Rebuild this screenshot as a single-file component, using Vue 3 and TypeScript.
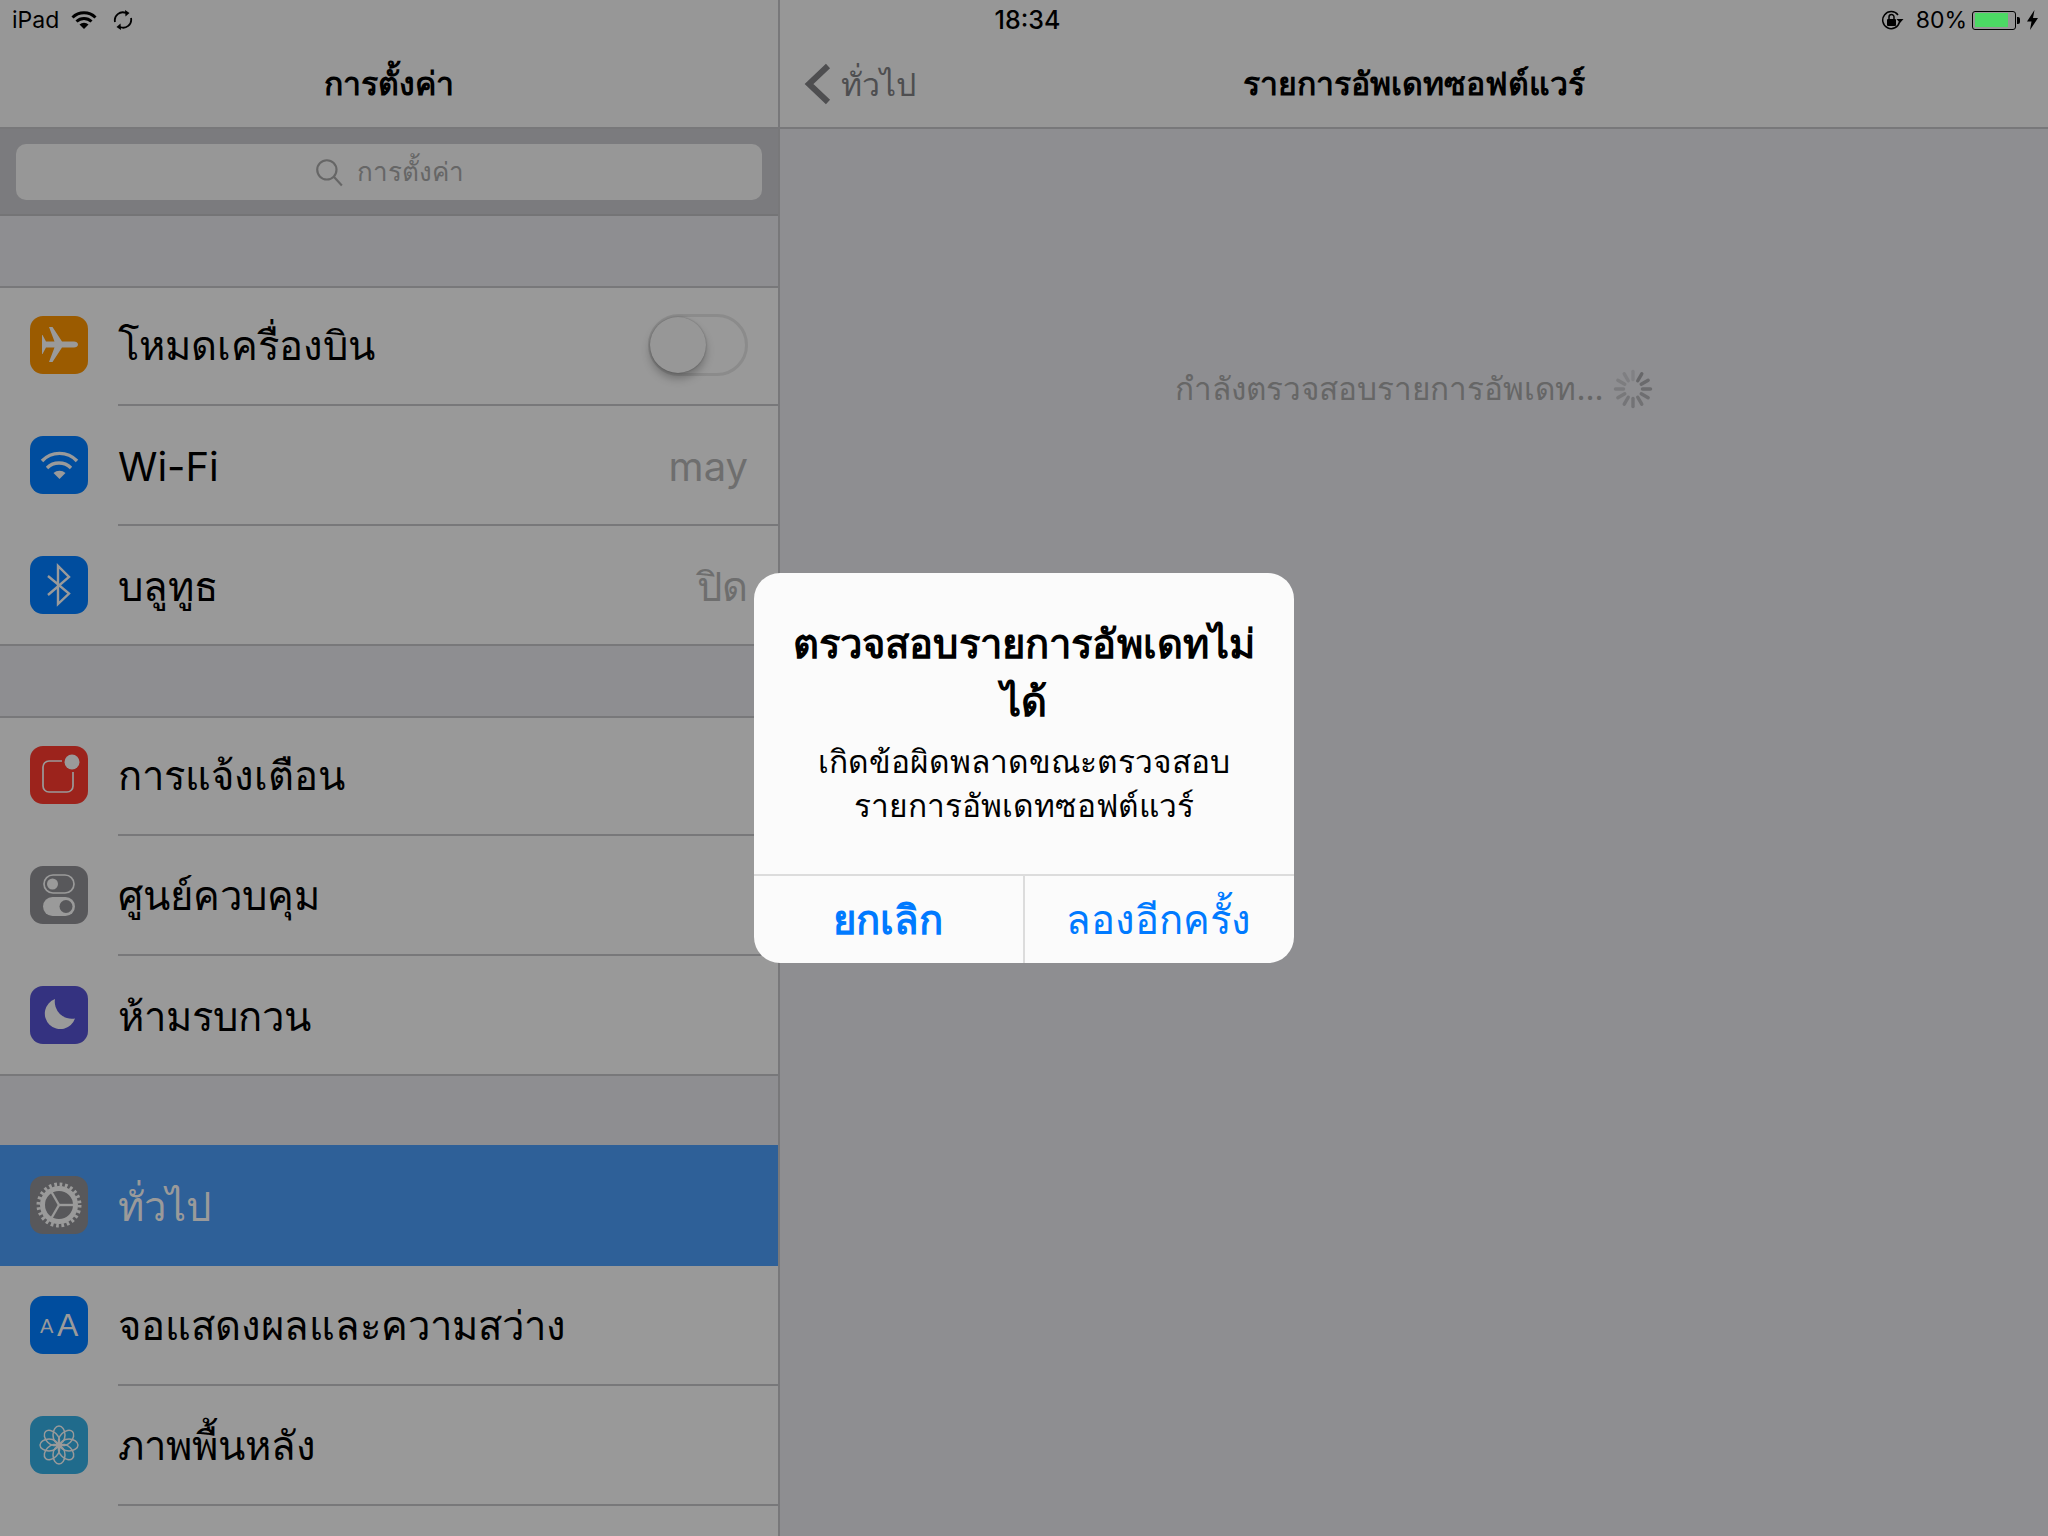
<script setup lang="ts">
interface Row {
  label: string
  icon: string
  tint: string
  value?: string
  toggle?: boolean
  selected?: boolean
}

const groups: Row[][] = [
  [
    { label: 'โหมดเครื่องบิน', icon: 'plane', tint: '#9b5b00', toggle: true },
    { label: 'Wi-Fi', icon: 'wifi', tint: '#004d9e', value: 'may' },
    { label: 'บลูทูธ', icon: 'bluetooth', tint: '#004d9e', value: 'ปิด' },
  ],
  [
    { label: 'การแจ้งเตือน', icon: 'notify', tint: '#9c231c' },
    { label: 'ศูนย์ควบคุม', icon: 'control', tint: '#58585b' },
    { label: 'ห้ามรบกวน', icon: 'moon', tint: '#343280' },
  ],
  [
    { label: 'ทั่วไป', icon: 'gear', tint: '#58585b', selected: true },
    { label: 'จอแสดงผลและความสว่าง', icon: 'text', tint: '#004d9e' },
    { label: 'ภาพพื้นหลัง', icon: 'flower', tint: '#206b8c' },
    { label: '', icon: '', tint: 'transparent' },
  ],
]

// the spinner fades clockwise from its darkest spoke at the upper right
const spinner = Array.from({ length: 12 }, (_, i) => ({
  angle: i * 30,
  opacity: 0.8 - ((i + 11) % 12) * 0.05,
}))
const petals = Array.from({ length: 8 }, (_, i) => i * 45)
const spokes = [0, 120, 240]
</script>

<template>
  <div class="screen">
    <div class="status">
      <div class="status-left">
        <span>iPad</span>
        <svg class="st-wifi" width="26" height="20" viewBox="0 0 26 20">
          <path d="M1.500 7.500a16.500 16.500 0 0 1 23 0M5.500 11.500a11 11 0 0 1 15 0" fill="none" stroke="#000" stroke-width="3" />
          <path d="M13 19l-4.500-4.500a6.500 6.500 0 0 1 9 0z" />
        </svg>
        <svg class="st-sync" width="20" height="20" viewBox="0 0 20 20" fill="none" stroke="#000" stroke-width="1.800">
          <path d="M2 12A8 8 0 0 1 13 3" />
          <path d="M18 8A8 8 0 0 1 7 17" />
          <path d="M12 0l4.500 3-4 3.500z" fill="#000" stroke="none" />
          <path d="M8 20l-4.500-3 4-3.500z" fill="#000" stroke="none" />
        </svg>
      </div>
      <div class="status-time">18:34</div>
      <div class="status-right">
        <svg width="24" height="20" viewBox="0 0 24 20">
          <path d="M18.500 12A8.500 8.500 0 1 1 17 5" fill="none" stroke="#000" stroke-width="1.500" />
          <path d="M15.500 9h7l-3.500 4z" />
          <rect x="6" y="9" width="9" height="7" rx="1" />
          <path d="M8 9V7a2.500 2.500 0 0 1 5 0v2" fill="none" stroke="#000" stroke-width="1.500" />
        </svg>
        <span class="pct">80%</span>
        <div class="battery">
          <div class="battery-fill"></div>
        </div>
        <div class="battery-nub"></div>
        <svg class="bolt" width="11" height="20" viewBox="0 0 11 20">
          <path d="M7.500 0L0 11.500h4.500L3 20l8-12H6z" />
        </svg>
      </div>
    </div>

    <aside class="master">
      <div class="nav">
        <span class="nav-title">การตั้งค่า</span>
      </div>
      <div class="search-wrap">
        <div class="search">
          <svg width="30" height="30" viewBox="0 0 28 28" fill="none" stroke="#666" stroke-width="2">
            <circle cx="12" cy="12" r="9" />
            <path d="M18.500 18.500l7.500 8" />
          </svg>
          <span>การตั้งค่า</span>
        </div>
      </div>
      <section v-for="(group, g) in groups" :key="g" class="group">
        <div v-for="row in group" :key="row.label" class="row" :class="{ selected: row.selected }">
          <div class="icon" :style="{ background: row.tint }">
            <svg v-if="row.icon" width="58" height="58" viewBox="0 0 58 58" fill="#9a9a9a">
              <path v-if="row.icon === 'plane'" d="M48 28.500c0-1.800-2-3-4-3H32L22.500 11H19l5.500 14.500H16L12.500 19H12v19h.5l3.500-6.500h8.500L19 46h3.500L32 31.500h12c2 0 4-1.200 4-3z" />
              <template v-else-if="row.icon === 'wifi'">
                <path d="M12 25a24 24 0 0 1 35 0M17 32a17 17 0 0 1 24 0" fill="none" stroke="#9a9a9a" stroke-width="3.400" />
                <path d="M29.500 43l-6-6a9 9 0 0 1 12 0z" />
              </template>
              <path v-else-if="row.icon === 'bluetooth'" d="M18 20l21 17.500L28 48V10l11 11-21 18" fill="none" stroke="#9a9a9a" stroke-width="2.400" />
              <template v-else-if="row.icon === 'notify'">
                <path d="M32 15H19a6 6 0 0 0-6 6v19a6 6 0 0 0 6 6h18a6 6 0 0 0 6-6V26" fill="none" stroke="#9a9a9a" stroke-width="1.700" />
                <circle cx="42" cy="16" r="7.500" />
              </template>
              <template v-else-if="row.icon === 'control'">
                <rect x="14" y="9" width="30" height="18" rx="9" fill="none" stroke="#9a9a9a" stroke-width="1.700" />
                <circle cx="22.500" cy="18" r="5.500" />
                <rect x="13" y="31" width="32" height="19" rx="9.500" />
                <circle cx="36" cy="40.500" r="6.500" fill="#58585b" />
              </template>
              <path v-else-if="row.icon === 'moon'" d="M25 13a15.500 15.500 0 1 0 20 19.500A17 17 0 0 1 25 13z" />
              <template v-else-if="row.icon === 'gear'">
                <circle cx="29" cy="29" r="20.500" fill="none" stroke="#9a9a9a" stroke-width="4" stroke-dasharray="2.700 2.667" />
                <circle cx="29" cy="29" r="16.500" fill="none" stroke="#9a9a9a" stroke-width="5" />
                <path v-for="a in spokes" :key="a" d="M29 29H44" :transform="`rotate(${a} 29 29)`" stroke="#9a9a9a" stroke-width="2.400" />
              </template>
              <template v-else-if="row.icon === 'text'">
                <text x="10" y="37" class="aa small">A</text>
                <text x="27" y="40" class="aa big">A</text>
              </template>
              <template v-else-if="row.icon === 'flower'">
                <ellipse v-for="a in petals" :key="a" cx="29" cy="19" rx="6" ry="9" fill="none" stroke="#9a9a9a" stroke-width="1.500" :transform="`rotate(${a} 29 29)`" />
                <circle cx="29" cy="29" r="3" />
              </template>
            </svg>
          </div>
          <div class="row-body">
            <span class="row-label">{{ row.label }}</span>
            <span v-if="row.value" class="row-value">{{ row.value }}</span>
            <div v-if="row.toggle" class="toggle"><div class="knob"></div></div>
          </div>
        </div>
      </section>
    </aside>

    <main class="detail">
      <div class="nav">
        <div class="back">
          <svg width="28" height="42" viewBox="0 0 28 42" fill="none" stroke="#4e4e50" stroke-width="6">
            <path d="M25 3L6 21l19 18" />
          </svg>
          <span>ทั่วไป</span>
        </div>
        <span class="nav-title">รายการอัพเดทซอฟต์แวร์</span>
      </div>
      <div class="checking">
        <span>กำลังตรวจสอบรายการอัพเดท...</span>
        <svg width="40" height="40" viewBox="0 0 40 40" stroke="#5e5e60" stroke-width="3.400" stroke-linecap="round">
          <path v-for="s in spinner" :key="s.angle" d="M20 2.500V10.500" :opacity="s.opacity" :transform="`rotate(${s.angle} 20 20)`" />
        </svg>
      </div>
    </main>

    <div class="overlay">
      <div class="alert">
        <div class="alert-body">
          <h2>ตรวจสอบรายการอัพเดทไม่ได้</h2>
          <p>เกิดข้อผิดพลาดขณะตรวจสอบ<br />รายการอัพเดทซอฟต์แวร์</p>
        </div>
        <div class="alert-actions">
          <button class="cancel">ยกเลิก</button>
          <button>ลองอีกครั้ง</button>
        </div>
      </div>
    </div>
  </div>
</template>

<style>
html, body {
  margin: 0;
  background: #8e8e91;
}
</style>

<style scoped>
.screen {
  position: relative;
  display: flex;
  width: 2048px;
  height: 1536px;
  overflow: hidden;
  background: #8e8e91;
  color: #000;
  font-family: "Inter", "Noto Sans", "Liberation Sans", sans-serif;
}
.status {
  position: absolute;
  z-index: 1;
  top: 0;
  left: 0;
  right: 0;
  height: 40px;
  display: grid;
  grid-template-columns: 1fr auto 1fr;
  align-items: center;
  padding: 0 10px 0 12px;
  font-size: 23px;
}
.status-left {
  display: flex;
  align-items: center;
}
.st-wifi {
  margin-left: 12px;
}
.st-sync {
  margin-left: 16px;
}
.status-time {
  font-size: 25px;
  font-weight: 500;
  padding-left: 5px;
}
.status-right {
  display: flex;
  align-items: center;
  justify-content: flex-end;
}
.pct {
  margin: 0 5px 0 11px;
}
.battery {
  width: 44px;
  height: 19px;
  box-sizing: border-box;
  border: 1.500px solid #000;
  border-radius: 3px;
  padding: 1.500px;
}
.battery-fill {
  width: 33px;
  height: 100%;
  background: #4cd964;
}
.battery-nub {
  width: 3px;
  height: 7px;
  margin: 0 7px 0 1px;
  background: #000;
  border-radius: 0 2px 2px 0;
}
.master {
  width: 780px;
  flex: none;
  box-sizing: border-box;
  border-right: 2px solid #78787a;
}
.detail {
  flex: 1;
  min-width: 0;
}
.nav {
  position: relative;
  height: 129px;
  box-sizing: border-box;
  padding-top: 40px;
  border-bottom: 2px solid #78787a;
  background: #979797;
  display: flex;
  align-items: center;
  justify-content: center;
}
.nav-title {
  font-size: 32px;
  font-weight: 700;
}
.back {
  position: absolute;
  left: 23px;
  top: 57px;
  display: flex;
  align-items: center;
  gap: 10px;
  font-size: 32px;
  color: #4e4e50;
}
.back span {
  padding-top: 2px;
}
.search-wrap {
  height: 87px;
  box-sizing: border-box;
  padding: 15px 16px 16px;
  background: #7b7b7e;
  border-bottom: 2px solid #747476;
}
.search {
  height: 56px;
  border-radius: 10px;
  background: #979797;
  color: #666;
  font-size: 26px;
  display: flex;
  align-items: center;
  justify-content: center;
  gap: 13px;
}
.search span {
  margin-bottom: 2px;
}
.group {
  margin-top: 70px;
  background: #999;
  box-shadow: inset 0 2px 0 #78787a, inset 0 -2px 0 #78787a;
}
.group:last-of-type {
  margin-top: 69px;
  box-shadow: none;
}
.row {
  height: 120px;
  display: flex;
  align-items: center;
  padding-left: 30px;
  gap: 30px;
  box-sizing: border-box;
}
.row.selected {
  height: 121px;
  background: #2e6098;
  color: #9a9a9a;
}
.row-body {
  flex: 1;
  align-self: stretch;
  box-sizing: border-box;
  display: flex;
  align-items: center;
  justify-content: space-between;
  padding: 2px 30px 0 0;
  border-bottom: 2px solid #78787a;
  font-size: 40px;
}
.row:last-child .row-body,
.row.selected .row-body {
  border-bottom: 0;
}
.row-value {
  color: #6e6e6e;
}
.icon {
  width: 58px;
  height: 58px;
  flex: none;
  margin-bottom: 2px;
  border-radius: 13px;
}
.aa {
  fill: #9a9a9a;
  font-family: "Liberation Sans", sans-serif;
}
.aa.small {
  font-size: 20px;
}
.aa.big {
  font-size: 32px;
}
.toggle {
  position: relative;
  width: 100px;
  height: 62px;
  margin-bottom: 2px;
  box-sizing: border-box;
  border: 3px solid #8b8b8b;
  border-radius: 31px;
}
.knob {
  position: absolute;
  left: -1px;
  top: 0;
  width: 56px;
  height: 56px;
  border-radius: 50%;
  background: #979797;
  box-shadow: 0 6px 8px rgba(0, 0, 0, 0.25), 0 0 2px rgba(0, 0, 0, 0.3);
}
.checking {
  display: flex;
  align-items: center;
  justify-content: center;
  gap: 9px;
  margin-top: 235px;
  color: #666;
  font-size: 31.500px;
}
.overlay {
  position: absolute;
  z-index: 2;
  inset: 0;
  display: flex;
  align-items: center;
  justify-content: center;
}
.alert {
  width: 540px;
  height: 390px;
  display: flex;
  flex-direction: column;
  border-radius: 26px;
  background: #fbfbfb;
  overflow: hidden;
}
.alert-body {
  flex: 1;
  text-align: center;
  padding: 42px 30px 0;
}
.alert h2 {
  margin: 0;
  font-size: 40px;
  letter-spacing: 0.150px;
  line-height: 58px;
  font-weight: 700;
}
.alert p {
  margin: 9px 0 0;
  font-size: 31.700px;
  line-height: 44px;
}
.alert-actions {
  height: 87px;
  flex: none;
  display: flex;
  border-top: 2px solid #dcdcdc;
}
.alert-actions button {
  flex: 1;
  border: 0;
  background: none;
  padding: 0 2px 0 0;
  font-family: inherit;
  font-size: 40px;
  color: #007aff;
}
.alert-actions button + button {
  border-left: 2px solid #dcdcdc;
}
.alert-actions .cancel {
  font-weight: 700;
}
</style>
